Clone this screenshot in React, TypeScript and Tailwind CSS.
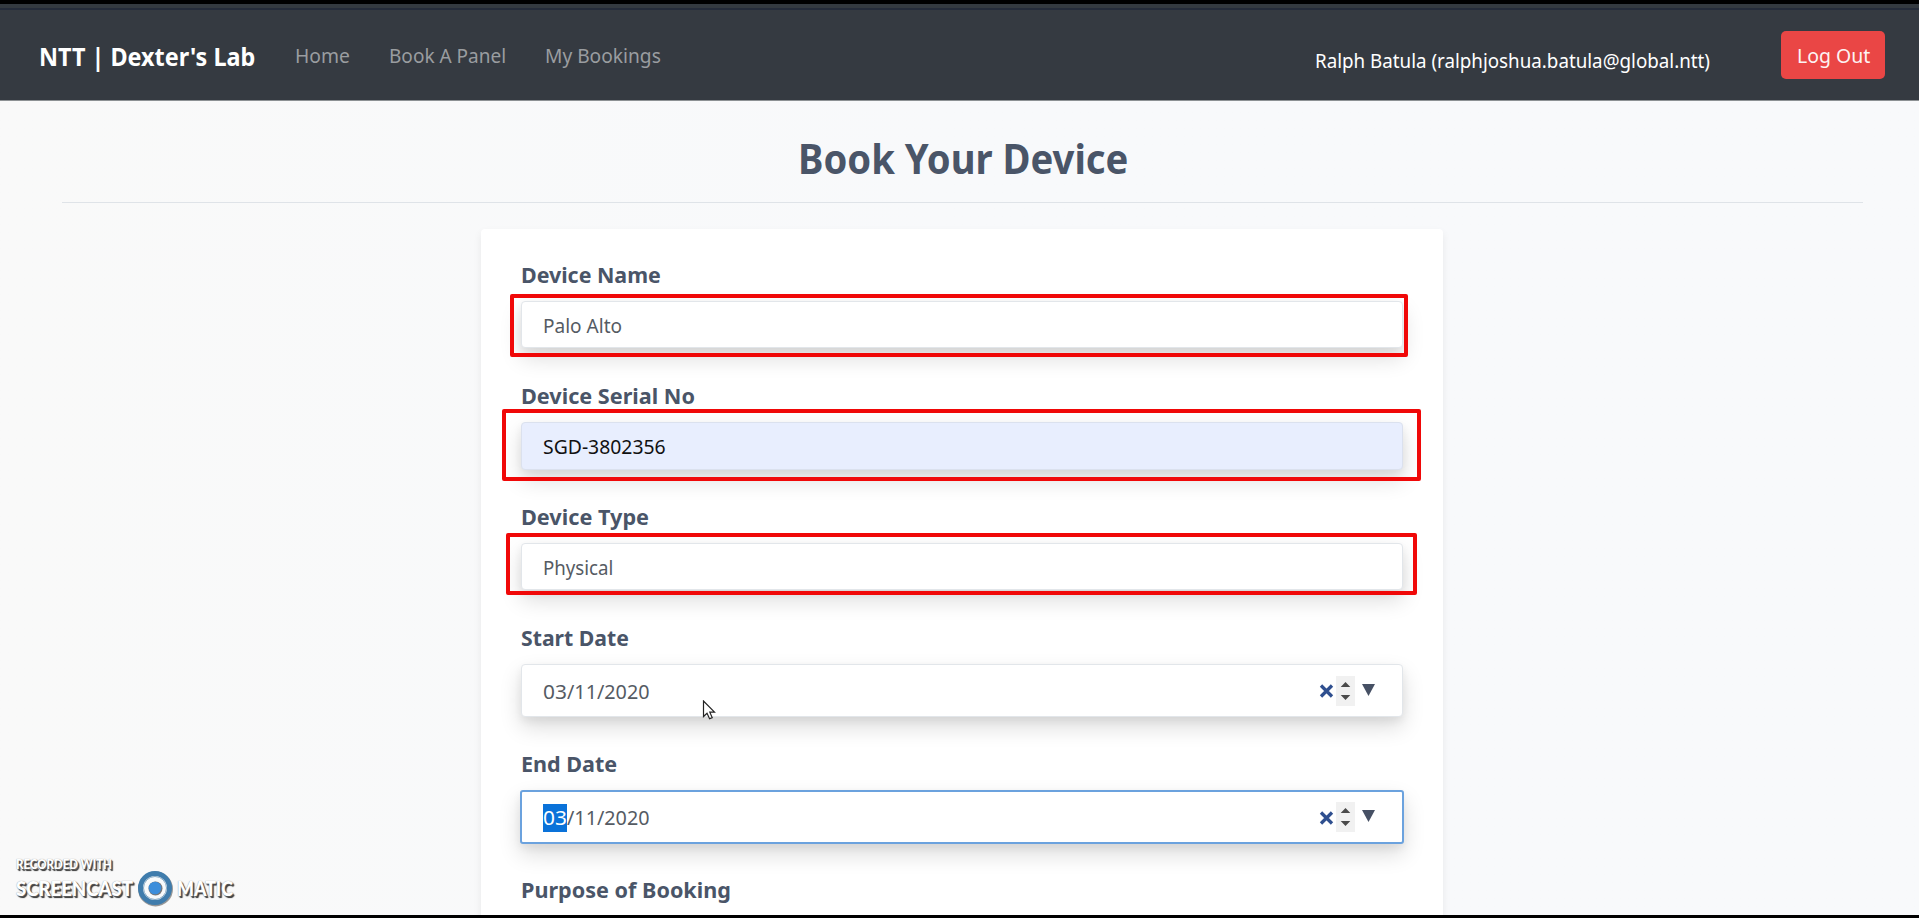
import React, { useLayoutEffect, useRef, useState } from "react";

/* Text that is condensed or widened to a fixed width. */
function FitText({ width, className = "", children }: { width: number; className?: string; children: string }) {
  const ref = useRef<HTMLSpanElement>(null);
  const [scale, setScale] = useState(1);
  useLayoutEffect(() => {
    if (ref.current) setScale(width / ref.current.offsetWidth);
  }, [width]);
  return (
    <span className={`block whitespace-nowrap ${className}`} style={{ width }}>
      <span ref={ref} className="inline-block origin-left" style={{ transform: `scaleX(${scale})` }}>
        {children}
      </span>
    </span>
  );
}

function Field({ label, labelWidth, className, children }: { label: string; labelWidth: number; className: string; children?: React.ReactNode }) {
  return (
    <div className={`relative shrink-0 ${className}`}>
      <FitText width={labelWidth} className="mb-[12px] text-[22px] leading-[30px] font-bold text-[#4a5568]">
        {label}
      </FitText>
      {children}
    </div>
  );
}

const box = "flex items-center rounded border pl-[21px] pt-[2px] text-[20px] leading-[28px] shadow-[0_10px_22px_rgba(0,0,0,0.14),0_4px_8px_rgba(0,0,0,0.06)]";

function DateControls() {
  return (
    <div className="mt-[-2px] mr-[27px] ml-auto flex h-[30px] items-center">
      <svg className="mt-[1px] mr-[2px]" width="15" height="14" viewBox="0 0 15 14">
        <path d="M2 1.5 13 12.5M13 1.5 2 12.5" stroke="#2f4f8f" strokeWidth="3.3" />
      </svg>
      <svg width="19" height="30" viewBox="0 0 19 30">
        <rect width="19" height="30" fill="#f1f1f1" />
        <path d="M4.7 11 9.5 6 14.3 11ZM4.7 19 9.5 24 14.3 19Z" fill="#4b4b4b" />
      </svg>
      <svg className="mt-[-2px] ml-[7px]" width="13" height="12" viewBox="0 0 13 12">
        <path d="M0 0H13L6.5 12Z" fill="#465064" />
      </svg>
    </div>
  );
}

export default function App() {
  return (
    <div className="relative flex h-[918px] w-[1919px] flex-col overflow-hidden bg-linear-to-r from-[#f9f9f9] via-[#f8f9fb] to-[#f8f9fb] font-['Noto_Sans',sans-serif]">
      <div className="h-[4px] shrink-0 bg-black" />
      <div className="h-[4px] shrink-0 bg-[#343a40]" />
      <div className="h-[2px] shrink-0 bg-[#252c3a]" />
      <nav className="flex h-[91px] shrink-0 items-start border-b border-[#8d9194] bg-[#353a41] pl-[39px] text-[20px] leading-[28px] text-[#9a9da0]">
        <FitText width={216} className="mt-[31px] mr-[40px] text-[25px] leading-[30px] font-bold text-white">NTT | Dexter's Lab</FitText>
        <FitText width={55} className="mt-[32px] mr-[39px]">Home</FitText>
        <FitText width={117} className="mt-[32px] mr-[39px]">Book A Panel</FitText>
        <FitText width={116} className="mt-[32px]">My Bookings</FitText>
        <FitText width={395} className="mt-[37px] mr-[71px] ml-auto text-white">Ralph Batula (ralphjoshua.batula@global.ntt)</FitText>
        <button className="mt-[21px] mr-[34px] flex h-[48px] w-[104px] items-center justify-center rounded-[5px] bg-[#ea4645] pt-[2px] text-[#fdf3f3]">
          <FitText width={73}>Log Out</FitText>
        </button>
      </nav>
      <header className="mr-[56px] ml-[62px] flex h-[102px] shrink-0 justify-center border-b border-[#dfe3e8]">
        <FitText width={330} className="mt-[27px] text-[41px] leading-[60px] font-bold text-[#4a5568]">Book Your Device</FitText>
      </header>
      <main className="mt-[26px] ml-[481px] flex h-[800px] w-[962px] shrink-0 flex-col rounded bg-white pt-[30px] pr-[40px] pl-[40px] shadow-[0_4px_8px_rgba(0,0,0,0.07)]">
        <Field label="Device Name" labelWidth={140} className="h-[121px]">
          <div className={`${box} h-[47px] border-[#e2e6ea] bg-white text-[#555b63]`}>
            <FitText width={79}>Palo Alto</FitText>
          </div>
          <div className="absolute top-[35px] left-[-11px] h-[63px] w-[898px] rounded-[2px] border-4 border-[#f00808]" />
        </Field>
        <Field label="Device Serial No" labelWidth={174} className="h-[121px]">
          <div className={`${box} h-[48px] border-[#dbe1ee] bg-[#e8eefe] text-[#111]`}>
            <FitText width={123}>SGD-3802356</FitText>
          </div>
          <div className="absolute top-[29px] left-[-19px] h-[72px] w-[919px] rounded-[2px] border-4 border-[#f00808]" />
        </Field>
        <Field label="Device Type" labelWidth={128} className="h-[121px]">
          <div className={`${box} h-[47px] border-[#e2e6ea] bg-white text-[#555b63]`}>
            <FitText width={70}>Physical</FitText>
          </div>
          <div className="absolute top-[32px] left-[-15px] h-[62px] w-[911px] rounded-[2px] border-4 border-[#f00808]" />
        </Field>
        <Field label="Start Date" labelWidth={108} className="h-[126px]">
          <div className={`${box} h-[53px] border-[#e2e6ea] bg-white text-[#555b63]`}>
            <FitText width={24}>03</FitText>
            <FitText width={83}>/11/2020</FitText>
            <DateControls />
          </div>
        </Field>
        <Field label="End Date" labelWidth={96} className="h-[126px]">
          <div className={`${box} mx-[-1px] h-[54px] border-2 border-[#6ba2de] bg-white !rounded-[3px] text-[#555b63]`}>
            <FitText width={24} className="bg-[#0a72d9] text-white">03</FitText>
            <FitText width={83}>/11/2020</FitText>
            <DateControls />
          </div>
        </Field>
        <Field label="Purpose of Booking" labelWidth={210} className="h-[60px]" />
      </main>

      <svg className="absolute top-[700px] left-[702px]" width="15" height="20" viewBox="0 0 15 20">
        <path d="M1.5 1V16.5L5 13.2 7.6 18.8 10.2 17.6 7.8 12.2H12.5Z" fill="#fff" stroke="#222" strokeWidth="1.2" />
      </svg>

      <div className="absolute top-[856px] left-[16px] font-['Lato',sans-serif] font-black text-white [text-shadow:0_0_1px_#888,1px_1px_1px_#555,2px_2px_1px_#333]">
        <FitText width={96} className="text-[13px] leading-[16px]">RECORDED WITH</FitText>
        <div className="flex h-[32px] items-center text-[20px] leading-[24px]">
          <FitText width={117}>SCREENCAST</FitText>
          <svg className="mx-[4px]" width="36" height="38" viewBox="0 0 36 38">
            <circle cx="18.5" cy="20" r="14.5" fill="none" stroke="#555" strokeWidth="6" opacity=".6" />
            <circle cx="18" cy="19" r="14.5" fill="#f8fafb" stroke="#3f7cac" strokeWidth="5" />
            <circle cx="18" cy="19" r="11.5" fill="none" stroke="#86a9c4" strokeWidth="1" />
            <circle cx="18.5" cy="19.5" r="7" fill="#777" />
            <circle cx="18" cy="19" r="6.3" fill="#3d8edb" />
          </svg>
          <FitText width={56}>MATIC</FitText>
        </div>
      </div>
      <div className="absolute bottom-0 left-0 h-[3px] w-full bg-black" />
    </div>
  );
}
